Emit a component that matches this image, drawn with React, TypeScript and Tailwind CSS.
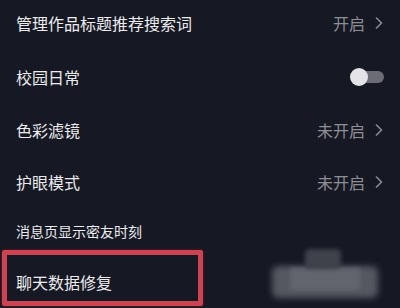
import React from "react";

const font = { fontFamily: '"Noto Sans CJK SC", "Noto Sans", sans-serif' };

function Chevron() {
  return (
    <svg width="8" height="12" viewBox="0 0 8 12" className="ml-[10px]">
      <path d="M1.5 1 L6.5 6 L1.5 11" fill="none" stroke="#8a8b93" strokeWidth="1.6" strokeLinecap="round" strokeLinejoin="round" />
    </svg>
  );
}

function Row({ h, label, value, toggle, small }: { h: number; label: string; value?: string; toggle?: boolean; small?: boolean }) {
  return (
    <div className="flex items-center justify-between pl-[16px] pr-[17px]" style={{ height: h }}>
      <span className={small ? "text-[14px] text-[#ececef]" : "text-[16px] text-[#ececef]"}>{label}</span>
      {value && (
        <div className="flex items-center">
          <span className="text-[16px] text-[#8d8e96]">{value}</span>
          <Chevron />
        </div>
      )}
      {toggle && (
        <div className="relative w-[34px] h-[18px] mr-[-1px]">
          <div className="absolute left-[6px] right-0 top-[3px] h-[12px] rounded-full bg-[#6b6c75]" />
          <div className="absolute left-0 top-0 w-[18px] h-[18px] rounded-full bg-[#e4e4e8]" />
        </div>
      )}
    </div>
  );
}

export default function App() {
  return (
    <div className="relative w-[400px] h-[308px] overflow-hidden bg-[#161823]" style={font}>
      <Row h={46} label="管理作品标题推荐搜索词" value="开启" />
      <Row h={62} label="校园日常" toggle />
      <Row h={44} label="色彩滤镜" value="未开启" />
      <Row h={60} label="护眼模式" value="未开启" />
      <Row h={38} label="消息页显示密友时刻" small />
      <div className="pl-[2px]">
        <div className="w-[201px] h-[56px] border-[5px] border-[#cc4452] rounded-[2px] shadow-[0_0_3px_#7a1826] flex items-center pl-[9px] pt-[7px]">
          <span className="text-[16px] text-[#ececef]">聊天数据修复</span>
        </div>
      </div>
      <div className="absolute left-[272px] top-[266px] w-[106px] h-[32px] rounded-[6px] bg-[#555761] blur-[3px]" />
      <div className="absolute left-[290px] top-[268px] w-[70px] h-[22px] bg-[#62646e] blur-[2px]" />
      <div className="absolute left-[305px] top-[249px] w-[36px] h-[20px] rounded-[5px] bg-[#3f414b] blur-[2px]" />
    </div>
  );
}
